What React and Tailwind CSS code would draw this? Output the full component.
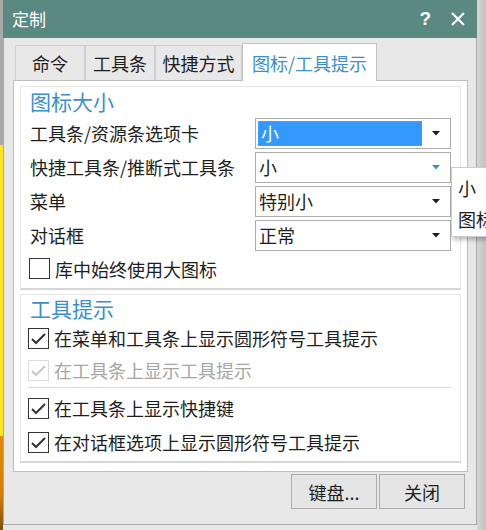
import React from "react";

const Arrow = ({ blue }) => (
  <svg width="8" height="5" viewBox="0 0 8 5" className="shrink-0">
    <path d="M0 0 L8 0 L4 4.5 Z" fill={blue ? "#3b8fcb" : "#1e1e1e"} />
  </svg>
);

const Select = ({ value, focused, blue }) => (
  <div className="w-[196px] h-[31px] border border-[#adadad] bg-white flex items-center pr-[10px]">
    {focused ? (
      <div className="ml-[2px] w-[164px] h-[25px] bg-[#3399ff] border border-dotted border-[#c98a3c] flex items-center pl-[2px] text-white">
        {value}
      </div>
    ) : (
      <div className="pl-[3px] text-[#1e1e1e]">{value}</div>
    )}
    <div className="flex-1" />
    <Arrow blue={blue} />
  </div>
);

const CheckBox = ({ checked, disabled }) => (
  <div
    className={`w-[21px] h-[21px] shrink-0 border bg-white flex items-center justify-center ${
      disabled ? "border-[#dcdcdc]" : "border-[#333333]"
    }`}
  >
    {checked && (
      <svg width="17" height="15" viewBox="0 0 17 15">
        <path
          d="M2 8 L6 12 L15 3"
          fill="none"
          stroke={disabled ? "#c8c8c8" : "#333333"}
          strokeWidth="2"
        />
      </svg>
    )}
  </div>
);

const CheckRow = ({ label, checked, disabled, h }) => (
  <div className={`flex items-center pl-[7px] ${h}`}>
    <CheckBox checked={checked} disabled={disabled} />
    <span className={`ml-[5px] ${disabled ? "text-[#a6a6a6]" : "text-[#1e1e1e]"}`}>{label}</span>
  </div>
);

const sizeRows = [
  { label: "工具条/资源条选项卡", value: "小", focused: true },
  { label: "快捷工具条/推断式工具条", value: "小", blue: true },
  { label: "菜单", value: "特别小" },
  { label: "对话框", value: "正常" },
];

export default function App() {
  return (
    <div className="flex w-[486px] h-[530px] overflow-hidden bg-[#e8e8e8] text-[18px] leading-[24px] font-['Noto_Sans_CJK_SC','Noto_Sans',sans-serif]">
      <div className="w-[3px] shrink-0 bg-[linear-gradient(to_bottom,#a9a9a9_0px,#a9a9a9_145px,#ffe420_145px,#ffe420_436px,#e08a06_436px,#d27f05_495px,#7e5010_530px)]" />

      <div className="w-[474px] shrink-0 flex flex-col h-[525px]">
        <div className="h-[38px] bg-[#5a8981] flex items-center pl-[9px] pr-[12px] text-white">
          <span className="text-[17px] leading-[22px]">定制</span>
          <div className="flex-1" />
          <span className="font-['Liberation_Sans',sans-serif] font-bold text-[19px] mr-[20px]">?</span>
          <svg width="14" height="14" viewBox="0 0 14 14">
            <path d="M1 1 L13 13 M13 1 L1 13" stroke="white" strokeWidth="2.2" />
          </svg>
        </div>

        <div className="flex-1 flex flex-col bg-[#e8e8e8] border-l border-r border-b border-[#a9a9a9]">
          <div className="relative z-10 mt-[5px] h-[37px] flex items-end pl-[11px]">
            <div className="w-[70px] h-[35px] border border-b-0 border-[#cfcfcf] flex items-center justify-center text-[#1e1e1e]">命令</div>
            <div className="w-[70px] h-[35px] border border-b-0 border-[#cfcfcf] flex items-center justify-center text-[#1e1e1e]">工具条</div>
            <div className="w-[87px] h-[35px] border border-b-0 border-[#cfcfcf] flex items-center justify-center text-[#1e1e1e]">快捷方式</div>
            <div className="w-[135px] h-[38px] -mb-px border border-b-0 border-[#c3c3c3] bg-white flex items-center justify-center text-[#3b8fcb]">图标/工具提示</div>
          </div>

          <div className="ml-[9px] w-[455px] h-[392px] border border-[#bdbdbd] bg-white px-[6px] pt-[5px]">
            <div className="border border-[#e6e6e6] border-b-2 border-b-[#d6d6d6] pb-[3px]">
              <div className="h-[29px] pl-[9px] pt-[1px] text-[21px] leading-[26px] text-[#3b8fcb]">图标大小</div>
              {sizeRows.map((r) => (
                <div key={r.label} className="h-[34px] flex items-center pl-[9px] pr-[9px]">
                  <span className="text-[#1e1e1e]">{r.label}</span>
                  <div className="flex-1" />
                  <Select value={r.value} focused={r.focused} blue={r.blue} />
                </div>
              ))}
              <div className="h-[33px] flex items-center pl-[8px]">
                <CheckBox />
                <span className="ml-[5px] text-[#1e1e1e]">库中始终使用大图标</span>
              </div>
            </div>

            <div className="mt-[4px] border border-[#e6e6e6] border-b-2 border-b-[#d6d6d6] pb-[2px]">
              <div className="h-[27px] pl-[9px] text-[21px] leading-[26px] text-[#3b8fcb]">工具提示</div>
              <CheckRow h="h-[32px]" checked label="在菜单和工具条上显示圆形符号工具提示" />
              <CheckRow h="h-[32px]" checked disabled label="在工具条上显示工具提示" />
              <div className="ml-[7px] mr-[9px] mt-[1px] mb-[3px] h-px bg-[#d9d9d9]" />
              <CheckRow h="h-[34px]" checked label="在工具条上显示快捷键" />
              <CheckRow h="h-[34px]" checked label="在对话框选项上显示圆形符号工具提示" />
            </div>
          </div>

          <div className="mt-[2px] flex justify-end gap-[2px] pr-[11px]">
            <button className="w-[86px] h-[35px] border border-[#adadad] bg-[#e5e5e5] text-[#1e1e1e]">键盘...</button>
            <button className="w-[86px] h-[35px] border border-[#adadad] bg-[#e5e5e5] text-[#1e1e1e]">关闭</button>
          </div>
        </div>
      </div>

      <div className="flex-1 bg-[linear-gradient(to_right,#d6d6d6,#c2c2c2)]" />

      <div className="absolute left-[451px] top-[167px] w-[60px] h-[70px] bg-white border border-[#cccccc] shadow-[2px_3px_4px_rgba(0,0,0,0.25)] flex flex-col pl-[6px] pt-[6px] text-[#1e1e1e]">
        <div className="h-[31px] leading-[28px]">小</div>
        <div className="h-[31px] leading-[28px] whitespace-nowrap">图标</div>
      </div>
    </div>
  );
}
